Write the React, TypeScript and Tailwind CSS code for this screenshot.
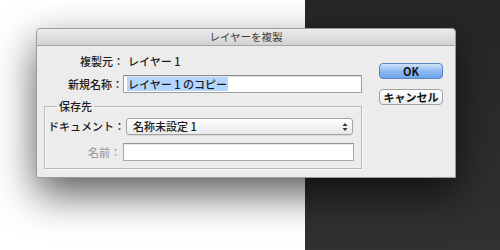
import React from "react";

const font = { fontFamily: '"Noto Sans CJK JP", "Noto Sans", sans-serif' };

export default function App() {
  return (
    <div className="relative w-[500px] h-[250px] flex overflow-hidden" style={font}>
      <div className="w-[305px] h-full bg-white" />
      <div className="flex-1 h-full bg-gradient-to-b from-[#262626] to-[#313131]" />

      {/* dialog window */}
      <div className="absolute left-[36px] top-[28px] w-[420px] h-[150px] flex flex-col rounded-t-[4px] border border-[#9c9c9c] bg-[#ececec] shadow-[0_16px_40px_rgba(0,0,0,0.65)]">
        <div className="h-[17px] shrink-0 flex items-center justify-center rounded-t-[4px] border-b border-[#a6a6a6] bg-gradient-to-b from-[#ececec] to-[#d3d3d3] text-[10.5px] leading-none text-[#3a3a3a]">
          レイヤーを複製
        </div>
        <div className="flex flex-1 pl-[7px] pt-[6px] text-[11px] leading-none text-[#1c1c1c] font-medium">
          {/* left column */}
          <div className="w-[318px] flex flex-col">
            <div className="flex h-[18px] items-center">
              <div className="w-[80px] text-right">複製元：</div>
              <div className="pl-[4px]">レイヤー 1</div>
            </div>
            <div className="flex h-[18px] items-center mt-[5px]">
              <div className="w-[79px] text-right">新規名称：</div>
              <div className="w-[239px] h-[18px] flex items-center border border-[#9f9f9f] border-t-[#8a8a8a] bg-white pl-[3px] shadow-[inset_0_1px_1px_rgba(0,0,0,0.12)]">
                <span className="bg-[#b4d5fe] leading-[14px] px-[1px]">レイヤー 1 のコピー</span>
              </div>
            </div>
            <fieldset className="mt-[6px] border border-[#b9b9b9] shadow-[inset_1px_1px_0_#f8f8f8,1px_1px_0_#f8f8f8] pb-[7px]">
              <legend className="ml-[12px] px-[2px] leading-[14px]">保存先</legend>
              <div className="flex h-[17px] items-center mt-[5px]">
                <div className="w-[80px] text-right">ドキュメント：</div>
                <div className="ml-[1px] w-[227px] h-[17px] flex items-center justify-between rounded-[3px] border border-[#a3a3a3] bg-gradient-to-b from-[#ffffff] to-[#e9e9e9] pl-[6px] pr-[4px] shadow-[0_1px_0_rgba(0,0,0,0.08)]">
                  <span>名称未設定 1</span>
                  <svg width="6" height="10" viewBox="0 0 6 10">
                    <path d="M3 1 L5.5 4 L0.5 4 Z" fill="#333" />
                    <path d="M3 9 L5.5 6 L0.5 6 Z" fill="#333" />
                  </svg>
                </div>
              </div>
              <div className="flex h-[18px] items-center mt-[8px]">
                <div className="w-[76px] text-right text-[#a0a0a0]">名前：</div>
                <div className="ml-[2px] w-[231px] h-[18px] border border-[#a8a8a8] border-t-[#949494] bg-white shadow-[inset_0_1px_1px_rgba(0,0,0,0.1)]" />
              </div>
            </fieldset>
          </div>
          {/* button column */}
          <div className="ml-[17px] w-[64px] flex flex-col">
            <div className="mt-[11px] h-[16px] flex items-center justify-center rounded-[4px] border border-[#5c82c0] bg-gradient-to-b from-[#cfe3fb] via-[#8fbaf1] to-[#6ea4ee] font-bold text-[11px] text-[#111]">
              OK
            </div>
            <div className="mt-[10px] h-[16px] flex items-center justify-center rounded-[4px] border border-[#a2a2a2] bg-gradient-to-b from-[#ffffff] to-[#ececec] font-bold text-[11px] text-[#111]">
              キャンセル
            </div>
          </div>
        </div>
      </div>
    </div>
  );
}
